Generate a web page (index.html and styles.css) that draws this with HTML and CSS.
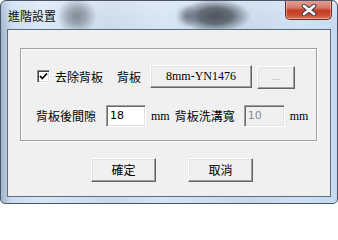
FILE: index.html
```html
<!DOCTYPE html>
<html lang="zh-Hant">
<head>
<meta charset="utf-8">
<title>進階設置</title>
<link rel="stylesheet" href="styles.css">
</head>
<body>
<div class="window">
  <div class="titlebar">
    <span class="title">進階設置</span>
    <div class="close">
      <svg width="16" height="12" viewBox="0 0 16 12">
        <path d="M3 2 L13 10 M13 2 L3 10" stroke="#3a3f4a" stroke-width="4.6" stroke-linecap="round" fill="none"/>
        <path d="M3 2 L13 10 M13 2 L3 10" stroke="#ffffff" stroke-width="2.6" stroke-linecap="round" fill="none"/>
      </svg>
    </div>
  </div>
  <div class="client">
    <div class="group">
      <div class="row row-top">
        <span class="check">
          <svg width="9" height="9" viewBox="0 0 9 9"><polyline points="1,4 3.3,6.5 8,1.5" fill="none" stroke="#000" stroke-width="1.8"/></svg>
        </span>
        <span class="lbl lbl-remove">去除背板</span>
        <span class="lbl lbl-board">背板</span>
        <span class="btn btn-board">8mm-YN1476</span>
        <span class="btn btn-more disabled">...</span>
      </div>
      <div class="row row-bottom">
        <span class="lbl lbl-gap">背板後間隙</span>
        <span class="field">18</span>
        <span class="unit">mm</span>
        <span class="lbl lbl-groove">背板洗溝寬</span>
        <span class="field field-groove disabled">10</span>
        <span class="unit">mm</span>
      </div>
    </div>
    <div class="actions">
      <span class="btn btn-ok">確定</span>
      <span class="btn btn-cancel">取消</span>
    </div>
  </div>
</div>
</body>
</html>
```
FILE: styles.css
```css
* { box-sizing: border-box; }
html, body { margin: 0; padding: 0; }
body {
  width: 338px;
  height: 204px;
  overflow: hidden;
  font-family: "Liberation Serif", "Noto Sans CJK TC", serif;
  font-size: 12px;
  color: #000;
}
.window {
  width: 338px;
  height: 204px;
  border: 1px solid #47566a;
  border-radius: 6px 6px 5px 5px;
  display: flex;
  flex-direction: column;
  background:
    radial-gradient(ellipse 20px 18px at 76px 15px, rgba(100,108,118,0.75) 0, rgba(100,108,118,0.5) 45%, rgba(100,108,118,0) 100%),
    radial-gradient(ellipse 36px 17px at 214px 15px, rgba(70,78,88,0.95) 0, rgba(70,78,88,0.8) 45%, rgba(70,78,88,0) 100%),
    radial-gradient(ellipse 12px 12px at 186px 15px, rgba(90,98,110,0.6) 0, rgba(90,98,110,0) 100%),
    linear-gradient(to bottom, rgba(255,255,255,0.25), rgba(255,255,255,0) 30px),
    linear-gradient(to right, #9fb3ca 0, #c9dbee 10px, #d8e7f6 40px, #cad9ea 110px, #d4e4f4 160px, #c7d8ea 250px, #cde0f3 300px, #c4d9ef 338px);
  overflow: hidden;
}
.titlebar {
  height: 28px;
  display: flex;
  align-items: flex-start;
  flex: none;
}
.title {
  font-family: "Noto Sans CJK TC", sans-serif;
  font-size: 12px;
  line-height: 14px;
  margin: 8px 0 0 7px;
  color: #111;
}
.close {
  margin: -1px 5px 0 auto;
  width: 47px;
  height: 20px;
  border: 1px solid #6a2e27;
  border-top: none;
  border-radius: 0 0 5px 5px;
  background: linear-gradient(to bottom, #e7a597 0, #d87a69 40%, #c43c24 55%, #cb4a30 80%, #dc7a5e 100%);
  box-shadow: inset 0 0 0 1px rgba(255,255,255,0.35);
  display: flex;
  align-items: center;
  justify-content: center;
}
.client {
  margin: 0 6px 6px 6px;
  height: 168px;
  border: 1px solid #5d6c7d;
  background: #f0f0f0;
  display: flex;
  flex-direction: column;
}
.group {
  margin: 18px 0 0 12px;
  width: 297px;
  height: 93px;
  border: 1px solid #a0a0a0;
  box-shadow: inset 1px 1px 0 #fff, 1px 1px 0 #fff;
  display: flex;
  flex-direction: column;
}
.row {
  display: flex;
  align-items: center;
}
.row-top { margin-top: 16px; height: 23px; }
.row-bottom { margin-top: 17px; height: 22px; }
.lbl {
  font-family: "Noto Sans CJK TC", sans-serif;
  line-height: 14px;
  white-space: nowrap;
}
.check {
  margin-left: 16px;
  width: 13px;
  height: 13px;
  border: 1px solid;
  border-color: #8e8f8f #ffffff #ffffff #8e8f8f;
  box-shadow: inset 1px 1px 0 #404040, inset -1px -1px 0 #dcdcdc;
  background: #fff;
  display: flex;
  align-items: center;
  justify-content: center;
}
.lbl-remove { margin-left: 5px; }
.lbl-board { margin-left: 14px; }
.btn {
  display: flex;
  align-items: center;
  justify-content: center;
  background: #f0f0f0;
  border: 1px solid;
  border-color: #ffffff #646464 #646464 #ffffff;
  box-shadow: inset -1px -1px 0 #a0a0a0, inset 1px 1px 0 #e3e3e3;
  line-height: 14px;
  white-space: nowrap;
}
.btn-board { margin-left: 9px; width: 102px; height: 23px; padding-bottom: 1px; }
.btn-more { margin-left: 5px; width: 38px; height: 23px; margin-top: 1px; font-size: 10px; }
.disabled { color: #a0a0a0; }
.lbl-gap { margin-left: 15px; }
.field {
  margin-left: 10px;
  width: 40px;
  height: 22px;
  border: 1px solid;
  border-color: #a0a0a0 #ffffff #ffffff #a0a0a0;
  box-shadow: inset 1px 1px 0 #696969, inset -1px -1px 0 #e3e3e3;
  background: #fff;
  padding: 2px 0 0 3px;
  line-height: 15px;
  font-family: "DejaVu Sans", sans-serif;
  font-size: 11px;
}
.field-groove {
  margin-left: 9px;
  width: 41px;
  background: #f0f0f0;
  color: #8a8a8a;
}
.unit { margin-left: 5px; line-height: 14px; }
.lbl-groove { margin-left: 5px; }
.actions {
  display: flex;
  margin-top: 17px;
}
.btn-ok, .btn-cancel {
  width: 65px;
  height: 24px;
  font-family: "Noto Sans CJK TC", sans-serif;
  font-size: 12px;
}
.btn-ok { margin-left: 83px; }
.btn-cancel { margin-left: 32px; }
```
